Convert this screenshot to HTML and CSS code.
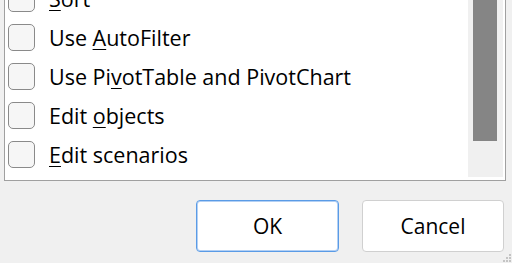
FILE: index.html
```html
<!DOCTYPE html>
<html lang="en">
<head>
    <meta charset="UTF-8">
    <title>Protect Sheet</title>
    <link rel="stylesheet" href="styles.css">
</head>
<body>

    <div class="dialog">
        <div class="list-box">
            <div class="items">
                <label class="item"><span class="box"></span><span><u>S</u>ort</span></label>
                <label class="item"><span class="box"></span><span>Use <u>A</u>utoFilter</span></label>
                <label class="item"><span class="box"></span><span>Use Pi<u>v</u>otTable and PivotChart</span></label>
                <label class="item"><span class="box"></span><span>Edit <u>o</u>bjects</span></label>
                <label class="item"><span class="box"></span><span><u>E</u>dit scenarios</span></label>
            </div>
            <div class="scrollbar">
                <div class="thumb"></div>
            </div>
        </div>

        <div class="buttons">
            <button class="btn default">OK</button>
            <button class="btn">Cancel</button>
        </div>
    </div>

    <svg class="grip" width="10" height="10" viewBox="0 0 10 10">
        <rect x="7" y="1" width="2" height="2" fill="#c4c4c4"/>
        <rect x="4" y="4" width="2" height="2" fill="#c4c4c4"/>
        <rect x="7" y="4" width="2" height="2" fill="#c4c4c4"/>
        <rect x="1" y="7" width="2" height="2" fill="#c4c4c4"/>
        <rect x="4" y="7" width="2" height="2" fill="#c4c4c4"/>
        <rect x="7" y="7" width="2" height="2" fill="#c4c4c4"/>
    </svg>

</body>
</html>
```

FILE: styles.css
```css
* {
    box-sizing: border-box;
    margin: 0;
    padding: 0;
}

html, body {
    width: 512px;
    height: 263px;
    overflow: hidden;
}

body {
    position: relative;
    background: #f0f0f0;
    font-family: "Open Sans", "Noto Sans", sans-serif;
    font-size: 21.5px;
    color: #000;
}

.dialog {
    padding: 0 7px 0 4px;
}

/* List of permissions */
.list-box {
    display: flex;
    margin-top: -22px;
    width: 502px;
    background: #fff;
    border: 1px solid #a0a0a0;
}

.items {
    flex: 1;
    padding: 0 0 6px 3px;
}

.item {
    display: flex;
    align-items: center;
    gap: 14px;
    height: 39px;
    white-space: nowrap;
}

.box {
    width: 27px;
    height: 27px;
    border: 1px solid #8a8a8a;
    border-radius: 5px;
    background: #f6f6f6;
    flex-shrink: 0;
}

.item u {
    text-decoration-thickness: 1px;
    text-underline-offset: 3px;
}

.scrollbar {
    width: 35px;
    margin: 2px 2px 3px 0;
    background: #f0f0f0;
    padding: 0 6px 0 5px;
}

.thumb {
    height: 160px;
    background: #858585;
}

/* Buttons */
.buttons {
    display: flex;
    justify-content: flex-end;
    gap: 23px;
    margin-top: 19px;
    padding-right: 1px;
}

.btn {
    width: 142px;
    height: 52px;
    background: #fff;
    border: 1px solid #d0d0d0;
    border-radius: 4px;
    font-family: inherit;
    font-size: 21px;
    color: #000;
}

.btn.default {
    width: 143px;
    border-color: #5a9be6;
    box-shadow: inset 0 0 0 1px #b3d0f4;
}

.grip {
    position: absolute;
    right: 0;
    bottom: 0;
}
```
